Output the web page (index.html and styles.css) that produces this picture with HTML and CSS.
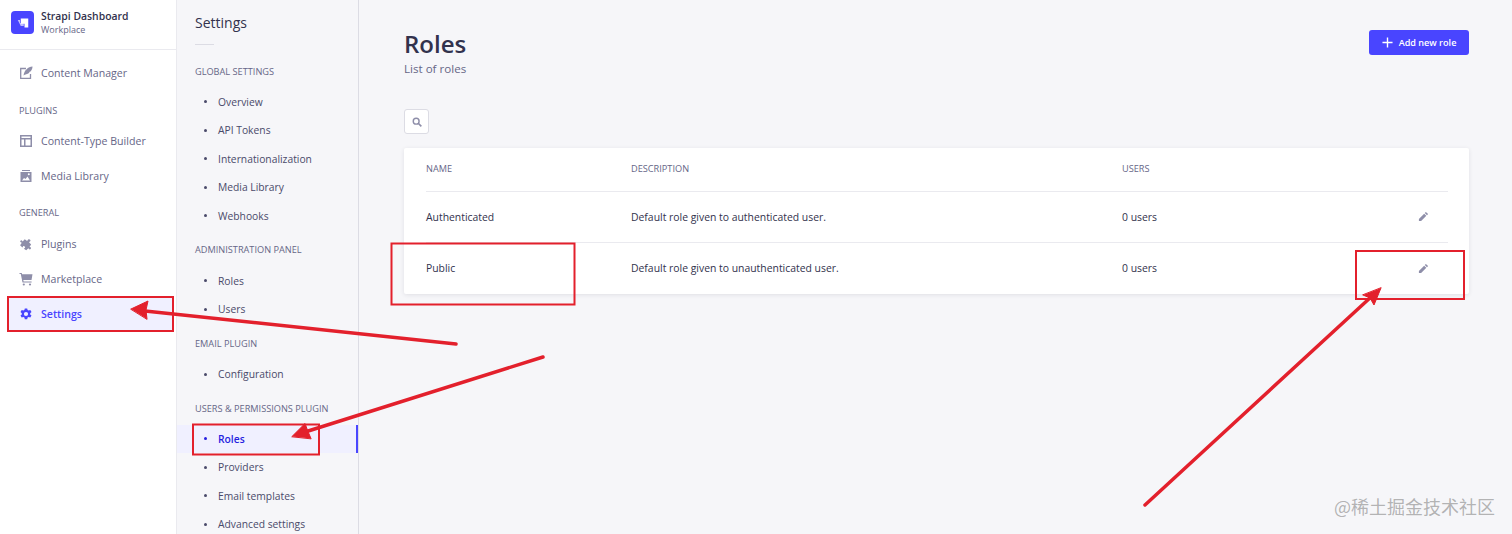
FILE: index.html
```html
<!DOCTYPE html>
<html lang="en">
<head>
<meta charset="utf-8">
<title>Roles</title>
<link rel="stylesheet" href="styles.css">
</head>
<body>
<div class="app">
  <aside class="nav">
    <div class="brand">
      <div class="logo">
        <svg viewBox="0 0 24 24" width="18" height="18"><path fill="#fff" d="M9 6h10v12h-5v-5H9z"/><path fill="#fff" opacity=".65" d="M5 8h3v4h5l0 4H9z"/></svg>
      </div>
      <div class="brand-text">
        <div class="brand-name">Strapi Dashboard</div>
        <div class="brand-sub">Workplace</div>
      </div>
    </div>
    <div class="nav-body">
      <a class="nav-item">
        <svg class="ico" viewBox="0 0 14 14"><path fill="none" stroke="currentColor" stroke-width="1.300" d="M7 2.500H1.700v9.800h9.800V8"/><path fill="currentColor" d="M13.500.5C9 1 5.500 4 4.500 9.500 6 8 8.500 8.500 10 7c.5-.5.200-1 .2-1l1.300-.5C13 4 13.500 2 13.500.5z"/></svg>
        <span>Content Manager</span>
      </a>
      <div class="nav-head head-plugins">PLUGINS</div>
      <a class="nav-item">
        <svg class="ico" viewBox="0 0 14 14"><path fill="currentColor" fill-rule="evenodd" d="M1 1h12v12H1zM2.500 5.500v6H5v-6zm4 0v6h5v-6zM2.500 2.500V4h9V2.500z"/></svg>
        <span>Content-Type Builder</span>
      </a>
      <a class="nav-item">
        <svg class="ico" viewBox="0 0 14 14"><path fill="currentColor" fill-rule="evenodd" d="M3 1h8v1H3zM1.500 3h11v10h-11zM3 11.500h8L8.500 7.500 6.500 10 5 9z"/><circle cx="9.800" cy="5.300" r="1" fill="#fff"/></svg>
        <span>Media Library</span>
      </a>
      <div class="nav-head head-general">GENERAL</div>
      <a class="nav-item">
        <svg class="ico" viewBox="0 0 14 14"><g transform="rotate(40 7 7)"><path fill="currentColor" d="M6 1.500c1-1 2.500-.500 2.500.8 0 .6-.3.9-.3 1.400l3 .3.300 2.800c.7 0 1-.4 1.500-.3 1 .3 1 2.300-.1 2.500-.5 0-.9-.3-1.400-.3l-.3 3-2.800.3c0-.6.400-.9.300-1.500-.3-1-2.300-1-2.500.1 0 .5.300.9.300 1.400l-3.200-.2-.2-3c-.6 0-1 .4-1.600.3C.4 9 .4 7.100 1.500 7c.5-.1.900.2 1.300.2L3 4.200l2.900-.3c0-.6-.5-1.600.1-2.400z"/></g></svg>
        <span>Plugins</span>
      </a>
      <a class="nav-item">
        <svg class="ico" viewBox="0 0 14 14"><path fill="currentColor" d="M.5 1h2.200l.4 1.300h10.400l-1 5.700H4.300l.3 1.400h8v1.100H3.500L1.800 2.100H.5z"/><circle cx="4.800" cy="12.500" r="1.100" fill="currentColor"/><circle cx="11" cy="12.500" r="1.100" fill="currentColor"/></svg>
        <span>Marketplace</span>
      </a>
      <a class="nav-item active">
        <svg class="ico" viewBox="0 0 14 14"><path fill="currentColor" fill-rule="evenodd" d="M5.800.6h2.400l.4 1.700 1 .5 1.700-.6 1.200 2-1.300 1.200v1.200l1.300 1.200-1.200 2-1.700-.6-1 .5-.4 1.700H5.800l-.4-1.700-1-.5-1.700.6-1.200-2L2.800 6.600V5.400L1.500 4.200l1.200-2 1.700.6 1-.5zM7 4.100a2.100 2.100 0 1 0 0 4.200 2.100 2.100 0 0 0 0-4.200z" transform="translate(0 .8)"/></svg>
        <span>Settings</span>
      </a>
    </div>
  </aside>

  <section class="sub">
    <div class="sub-title">Settings</div>
    <div class="sub-rule"></div>
    <div class="sub-head first">GLOBAL SETTINGS</div>
    <ul class="sub-list">
      <li>Overview</li>
      <li>API Tokens</li>
      <li>Internationalization</li>
      <li>Media Library</li>
      <li>Webhooks</li>
    </ul>
    <div class="sub-head">ADMINISTRATION PANEL</div>
    <ul class="sub-list">
      <li>Roles</li>
      <li>Users</li>
    </ul>
    <div class="sub-head">EMAIL PLUGIN</div>
    <ul class="sub-list">
      <li>Configuration</li>
    </ul>
    <div class="sub-head">USERS &amp; PERMISSIONS PLUGIN</div>
    <ul class="sub-list">
      <li class="current">Roles</li>
      <li>Providers</li>
      <li>Email templates</li>
      <li>Advanced settings</li>
    </ul>
  </section>

  <main class="main">
    <header class="page-head">
      <div>
        <h1>Roles</h1>
        <p>List of roles</p>
      </div>
      <button class="add-btn">
        <svg viewBox="0 0 12 12" width="11" height="11"><path fill="none" stroke="#fff" stroke-width="1.500" d="M6 .5v11M.5 6h11"/></svg>
        <span>Add new role</span>
      </button>
    </header>
    <button class="search-btn" aria-label="Search">
      <svg viewBox="0 0 12 12" width="10" height="10"><circle cx="5" cy="5" r="3.500" fill="none" stroke="#8e8ea9" stroke-width="1.700"/><path d="M7.500 7.500l3.700 3.700" stroke="#8e8ea9" stroke-width="2"/></svg>
    </button>
    <div class="card">
      <div class="row head">
        <div class="c-name">NAME</div>
        <div class="c-desc">DESCRIPTION</div>
        <div class="c-users">USERS</div>
        <div class="c-act"></div>
      </div>
      <div class="row">
        <div class="c-name">Authenticated</div>
        <div class="c-desc">Default role given to authenticated user.</div>
        <div class="c-users">0 users</div>
        <div class="c-act"><svg viewBox="0 0 12 12" width="11" height="11"><path fill="#8e8ea9" d="M8.600 1l2.400 2.400-1.200 1.200-2.400-2.400zM6.700 2.900l2.400 2.400-5.700 5.700H1V8.600z"/></svg></div>
      </div>
      <div class="row last">
        <div class="c-name">Public</div>
        <div class="c-desc">Default role given to unauthenticated user.</div>
        <div class="c-users">0 users</div>
        <div class="c-act"><svg viewBox="0 0 12 12" width="11" height="11"><path fill="#8e8ea9" d="M8.600 1l2.400 2.400-1.200 1.200-2.400-2.400zM6.700 2.900l2.400 2.400-5.700 5.700H1V8.600z"/></svg></div>
      </div>
    </div>
  </main>
</div>

<svg class="marks" viewBox="0 0 1512 534" width="1512" height="534">
  <g fill="none" stroke="#e3202c" stroke-width="2">
    <rect x="8" y="297" width="165" height="34"/>
    <rect x="193" y="424.500" width="126" height="30"/>
    <rect x="391.500" y="243.500" width="183" height="61"/>
    <rect x="1356" y="251" width="108" height="48"/>
  </g>
  <g stroke="#e3202c" stroke-width="3.500" fill="#e3202c" stroke-linecap="round">
    <path d="M456 344L145 311"/>
    <path d="M131 309l17-8-2 9 1 9z" stroke-width="1"/>
    <path d="M543 357L305 432"/>
    <path d="M292 436.500l13-13 3 8 3 7z" stroke-width="1"/>
    <path d="M1145 505L1371 297"/>
    <path d="M1381 288l-7 17-4-7-7-3z" stroke-width="1"/>
  </g>
</svg>
<div class="watermark">@稀土掘金技术社区</div>
</body>
</html>
```
FILE: styles.css
```css
* { box-sizing: border-box; }
html, body { margin: 0; height: 534px; overflow: hidden; }
body { font-family: "Open Sans", "Noto Sans", sans-serif; background: #f6f6f9; color: #4a4a6a; position: relative; }
.app { display: flex; height: 534px; }

.nav { width: 177px; flex: none; background: #fff; border-right: 1px solid #eaeaef; }
.brand { height: 50px; display: flex; align-items: center; gap: 7px; padding: 0 0 4px 11px; border-bottom: 1px solid #eaeaef; }
.logo { width: 23px; height: 23px; border-radius: 4px; background: #4945ff; display: flex; align-items: center; justify-content: center; }
.brand-name { font-size: 10.400px; font-weight: 600; line-height: 14px; color: #32324d; }
.brand-sub { font-size: 9px; line-height: 13px; color: #666687; }
.nav-body { padding: 6px 3px 0 8px; }
.nav-item { display: flex; align-items: center; gap: 8px; height: 34px; margin-bottom: .7px; padding-left: 11px; font-size: 10.600px; color: #666687; }
.nav-item.active { background: #f0f0ff; color: #4945ff; font-weight: 600; border-radius: 2px; }
.ico { width: 14px; height: 14px; flex: none; color: #8e8ea9; }
.active .ico { color: #4945ff; }
.nav-head { font-size: 9.200px; font-weight: 500; color: #666687; padding-left: 11px; line-height: 12px; }
.head-plugins { margin: 15px 0 7px; }
.head-general { margin: 14.500px 0 8px; }

.sub { width: 182px; flex: none; border-right: 1px solid #dcdce4; background: #f6f6f9; padding-top: 14px; }
.sub-title { font-size: 14px; font-weight: 500; line-height: 18px; color: #32324d; padding-left: 18px; }
.sub-rule { width: 19px; height: 1px; background: #dcdce4; margin: 12px 0 0 18px; }
.sub-head { font-size: 9.200px; font-weight: 500; line-height: 12px; color: #666687; padding-left: 18px; margin: 14.400px 0 10px; }
.sub-head.first { margin: 21px 0 9.500px; }
.sub-list { list-style: none; margin: 0; padding: 0; }
.sub-list li { height: 28.500px; display: flex; align-items: center; gap: 11px; padding-left: 27px; font-size: 10.300px; color: #4a4a6a; }
.sub-list li::before { content: ""; width: 3px; height: 3px; border-radius: 50%; background: #4a4a6a; }
.sub-list .current { background: #f0f0ff; color: #271fe0; font-weight: 600; border-right: 2px solid #4945ff; }
.sub-list .current::before { background: #271fe0; }

.main { flex: 1; padding: 29px 43px 0 45px; }
.page-head { display: flex; justify-content: space-between; align-items: flex-start; height: 80px; }
h1 { margin: 0; font-size: 24px; font-weight: 600; line-height: 30px; color: #32324d; }
p { margin: 2px 0 0; font-size: 11.600px; line-height: 15px; color: #666687; }
.add-btn { width: 100px; height: 25px; margin-top: 1px; border: 0; border-radius: 3px; background: #4945ff; color: #fff; display: flex; align-items: center; justify-content: center; gap: 6px; font: 600 9.100px "Open Sans", sans-serif; padding: 0; }
.search-btn { display: flex; align-items: center; justify-content: center; width: 25px; height: 25px; padding: 0; background: #fff; border: 1px solid #dcdce4; border-radius: 3px; margin-bottom: 14px; }
.card { background: #fff; border-radius: 2px; box-shadow: 0 1px 4px rgba(33, 33, 52, .1); padding: 0 21px 0 22px; width: 1065px; }
.row { display: flex; align-items: center; height: 51px; padding-bottom: 1px; border-bottom: 1px solid #eaeaef; font-size: 10.400px; color: #32324d; }
.row.head { height: 44px; padding-bottom: 2px; font-size: 9.200px; font-weight: 500; color: #666687; }
.row.last { border-bottom: 0; }
.c-name { width: 205px; }
.c-desc { width: 491px; }
.c-users { flex: 1; }
.c-act { display: flex; justify-content: flex-end; padding-right: 19px; width: 40px; }

.marks { position: absolute; left: 0; top: 0; pointer-events: none; }
.watermark { position: absolute; right: 17px; bottom: 17px; font-size: 18px; line-height: 22px; color: rgba(120, 120, 120, .55); font-family: "Noto Sans CJK SC", "Noto Sans", sans-serif; }
```
